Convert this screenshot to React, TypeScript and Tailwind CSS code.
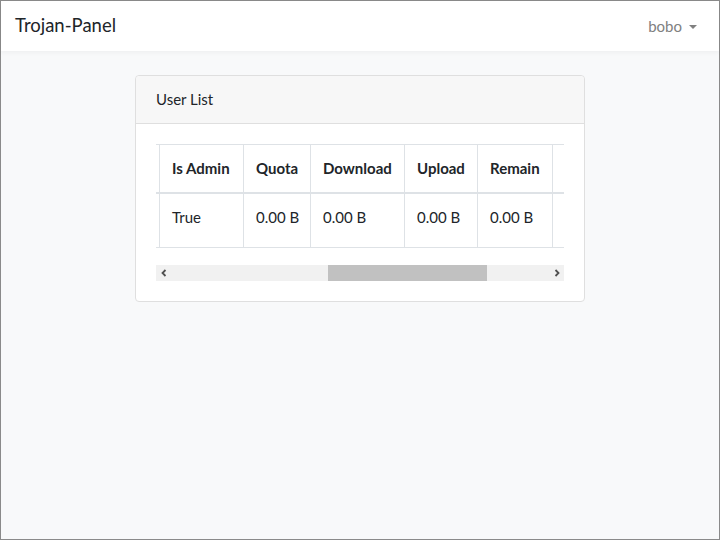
import React from 'react';

const hiddenCols = [{ label: 'Username', w: 'w-[120px]' }];

const cols = [
    { label: 'Is Admin', w: 'w-[84px]', value: 'True' },
    { label: 'Quota', w: 'w-[67px]', value: '0.00 B' },
    { label: 'Download', w: 'w-[94px]', value: '0.00 B' },
    { label: 'Upload', w: 'w-[73px]', value: '0.00 B' },
    { label: 'Remain', w: 'w-[75px]', value: '0.00 B' },
    { label: 'Action', w: 'w-[110px]', value: '' },
];

const Navbar: React.FC = () => (
    <nav className="h-[50px] bg-white shadow-[0_2px_4px_rgba(0,0,0,0.04)] flex items-center justify-between pl-[14px] pr-[22px] relative z-10">
        <span className="text-[18.5px] text-[#212529]">Trojan-Panel</span>
        <button className="flex items-center gap-[7px] text-[15px] text-[#808080]">
            bobo
            <svg width="8" height="4" viewBox="0 0 8 4" className="mt-[1px]">
                <path d="M0 0h8L4 4z" fill="#808080" />
            </svg>
        </button>
    </nav>
);

const ScrollBar: React.FC = () => (
    <div className="mt-[17px] h-[16px] bg-[#f1f1f1] flex items-center">
        <div className="w-[15px] h-full flex items-center justify-center">
            <svg width="6" height="8" viewBox="0 0 6 8">
                <path d="M4.5 1 1.5 4l3 3" stroke="#505050" strokeWidth="1.8" fill="none" />
            </svg>
        </div>
        <div className="flex-1 h-full relative">
            <div className="absolute top-0 bottom-0 left-[157px] w-[159px] bg-[#c1c1c1]" />
        </div>
        <div className="w-[15px] h-full flex items-center justify-center">
            <svg width="6" height="8" viewBox="0 0 6 8">
                <path d="M1.5 1 4.5 4l-3 3" stroke="#505050" strokeWidth="1.8" fill="none" />
            </svg>
        </div>
    </div>
);

const UserTable: React.FC = () => (
    <div className="overflow-hidden">
        <table className="table-fixed border-separate border-spacing-0 -ml-[117px] w-[623px] min-w-[623px] text-[15px] text-[#212529] whitespace-nowrap">
            <thead>
                <tr>
                    {hiddenCols.concat(cols).map((c, i) => (
                        <th
                            key={c.label}
                            className={`${c.w} h-[50px] px-3 pb-[13px] align-bottom text-left font-bold border-t border-b-2 border-[#dee2e6] ${i > 0 ? 'border-l' : ''}`}
                        >
                            {c.label}
                        </th>
                    ))}
                </tr>
            </thead>
            <tbody>
                <tr>
                    <td className="h-[54px] px-3 pt-3 align-top border-b border-[#dee2e6]">bobo</td>
                    {cols.map(c => (
                        <td key={c.label} className="h-[54px] px-3 pt-3 align-top border-b border-l border-[#dee2e6]">
                            {c.value}
                        </td>
                    ))}
                </tr>
            </tbody>
        </table>
    </div>
);

export default function App() {
    return (
        <div className="h-[540px] border border-[#8a8a8a] bg-[#f8f9fa] font-['Lato',sans-serif]">
            <Navbar />
            <main className="pt-6">
                <div className="w-[450px] mx-auto bg-white border border-[#dfdfdf] rounded">
                    <div className="h-[48px] bg-[#f7f7f7] border-b border-[#dfdfdf] px-5 flex items-center text-[15px] text-[#212529] rounded-t">
                        User List
                    </div>
                    <div className="p-5">
                        <UserTable />
                        <ScrollBar />
                    </div>
                </div>
            </main>
        </div>
    );
}
